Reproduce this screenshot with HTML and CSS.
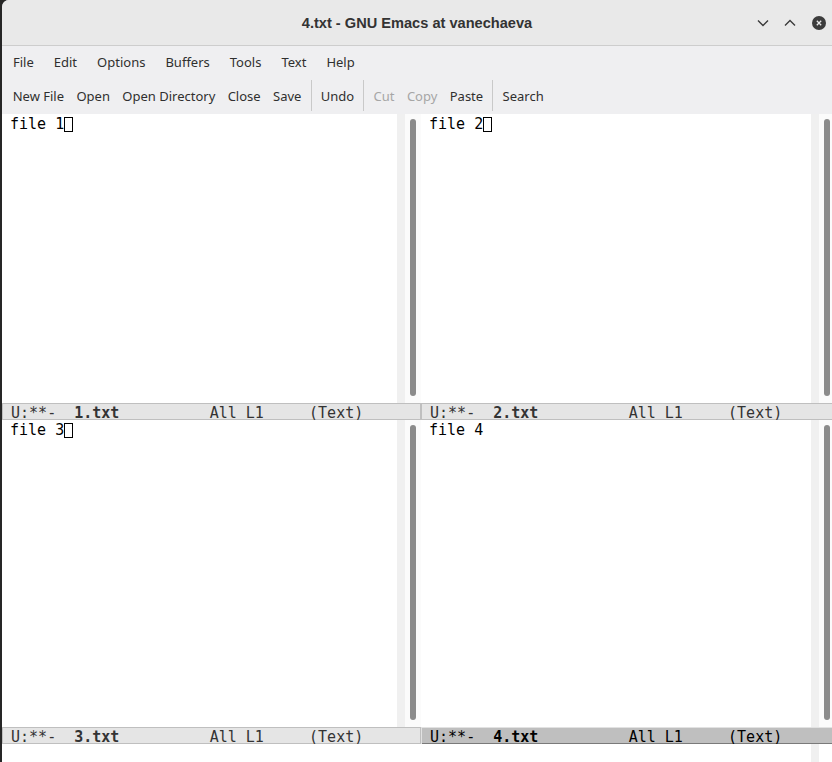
FILE: index.html
```html
<!DOCTYPE html>
<html>
<head>
<meta charset="utf-8">
<link rel="stylesheet" href="styles.css">
</head>
<body>
<div class="app">
  <header class="titlebar">
    <div class="title">4.txt - GNU Emacs at vanechaeva</div>
    <div class="wm">
      <span class="wm-btn"><svg width="12" height="8" viewBox="0 0 12 8"><polyline points="1,1.5 6,6.5 11,1.5" fill="none" stroke="#3a3a3a" stroke-width="1.4"/></svg></span>
      <span class="wm-btn"><svg width="12" height="8" viewBox="0 0 12 8"><polyline points="1,6.5 6,1.5 11,6.5" fill="none" stroke="#3a3a3a" stroke-width="1.4"/></svg></span>
      <span class="wm-btn close"><svg width="14" height="14" viewBox="0 0 14 14"><circle cx="7" cy="7" r="7" fill="#3c3c3c"/><path d="M4.8 4.8 L9.2 9.2 M9.2 4.8 L4.8 9.2" stroke="#e9e9e9" stroke-width="1.3"/></svg></span>
    </div>
  </header>
  <nav class="menubar">
    <span class="menu-item">File</span>
    <span class="menu-item">Edit</span>
    <span class="menu-item">Options</span>
    <span class="menu-item">Buffers</span>
    <span class="menu-item">Tools</span>
    <span class="menu-item">Text</span>
    <span class="menu-item">Help</span>
  </nav>
  <div class="toolbar">
    <span class="tool">New File</span>
    <span class="tool">Open</span>
    <span class="tool">Open Directory</span>
    <span class="tool">Close</span>
    <span class="tool">Save</span>
    <span class="sep"></span>
    <span class="tool">Undo</span>
    <span class="sep"></span>
    <span class="tool disabled">Cut</span>
    <span class="tool disabled">Copy</span>
    <span class="tool">Paste</span>
    <span class="sep"></span>
    <span class="tool">Search</span>
  </div>
  <main class="frame">
    <section class="window">
      <div class="body">
        <div class="fringe-l"></div>
        <div class="text">file 1<span class="cursor"></span></div>
        <div class="fringe-r"></div>
        <div class="scrollbar"><div class="thumb"></div></div>
      </div>
      <div class="modeline"> U:**-  <b>1.txt</b>          All L1     (Text)</div>
    </section>
    <section class="window">
      <div class="body">
        <div class="fringe-l"></div>
        <div class="text">file 2<span class="cursor"></span></div>
        <div class="fringe-r"></div>
        <div class="scrollbar"><div class="thumb"></div></div>
      </div>
      <div class="modeline"> U:**-  <b>2.txt</b>          All L1     (Text)</div>
    </section>
    <section class="window">
      <div class="body">
        <div class="fringe-l"></div>
        <div class="text">file 3<span class="cursor"></span></div>
        <div class="fringe-r"></div>
        <div class="scrollbar"><div class="thumb"></div></div>
      </div>
      <div class="modeline"> U:**-  <b>3.txt</b>          All L1     (Text)</div>
    </section>
    <section class="window">
      <div class="body">
        <div class="fringe-l"></div>
        <div class="text">file 4</div>
        <div class="fringe-r"></div>
        <div class="scrollbar"><div class="thumb"></div></div>
      </div>
      <div class="modeline active"> U:**-  <b>4.txt</b>          All L1     (Text)</div>
    </section>
  </main>
  <div class="echo">
    <div class="echo-fl"></div>
    <div class="echo-text"></div>
    <div class="echo-fr"></div>
    <div class="echo-rest"></div>
  </div>
</div>
</body>
</html>
```

FILE: styles.css
```css
html, body {
  margin: 0;
  padding: 0;
}
body {
  background: #262626;
  width: 832px;
  height: 762px;
  overflow: hidden;
}
.app {
  margin-left: 2px;
  width: 830px;
  height: 762px;
  overflow: hidden;
  background: #efeff1;
  border-top-left-radius: 7px;
  display: flex;
  flex-direction: column;
}
.titlebar {
  height: 45px;
  flex: 0 0 45px;
  border-bottom: 1px solid #cdcdcd;
  background: #e9e9e9;
  display: grid;
  grid-template-columns: 1fr auto 1fr;
  align-items: center;
}
.title {
  grid-column: 2;
  font: bold 14.6px "Liberation Sans", Arial, sans-serif;
  color: #333333;
  margin-top: 1px;
}
.wm {
  grid-column: 3;
  justify-self: end;
  display: flex;
  align-items: center;
  gap: 1px;
}
.wm-btn {
  width: 26px;
  height: 26px;
  display: flex;
  align-items: center;
  justify-content: center;
}
.wm-btn.close {
  margin-left: 2px;
}
.menubar {
  height: 33px;
  flex: 0 0 33px;
  box-sizing: border-box;
  padding: 7px 0 0 1px;
  display: flex;
  font: 13px/18px "Noto Sans", sans-serif;
  color: #2f2f2f;
}
.menu-item {
  padding: 0 10px;
}
.toolbar {
  height: 35px;
  flex: 0 0 35px;
  box-sizing: border-box;
  padding-left: 4.5px;
  display: flex;
  align-items: stretch;
  font: 13px/18px "Noto Sans", sans-serif;
  color: #2f2f2f;
}
.tool {
  padding: 8px 6.2px 0;
}
.tool.disabled {
  color: #a6a6a6;
}
.sep {
  width: 1px;
  background: #c9c9c9;
  margin: 1px 3px 3px;
}
.frame {
  flex: 0 0 630px;
  display: grid;
  grid-template-columns: 419px 414px;
  grid-template-rows: 306px 324px;
}
.window {
  display: grid;
  grid-template-rows: 1fr 17px;
  background: #ffffff;
  min-width: 0;
}
.body {
  display: grid;
  grid-template-columns: 8px 1fr 8px 16px;
  min-height: 0;
}
.fringe-l {
  background: #ffffff;
}
.fringe-r {
  background: #f0f0f0;
}
.text {
  font: 15px/17px "DejaVu Sans Mono", monospace;
  color: #000000;
  white-space: pre;
  overflow: hidden;
  padding-top: 2px;
}
.cursor {
  display: inline-block;
  width: 9px;
  height: 15px;
  box-sizing: border-box;
  border: 1px solid #000000;
  vertical-align: -3px;
}
.scrollbar {
  background: #fbfbfb;
  padding: 5px 5px 7px 5px;
  display: flex;
}
.thumb {
  flex: 0 0 6px;
  background: #8b8b8b;
  border-radius: 3px;
}
.modeline {
  font: 15px/17px "DejaVu Sans Mono", monospace;
  white-space: pre;
  overflow: hidden;
  box-sizing: border-box;
  padding-top: 1.5px;
  background: #e5e5e5;
  color: #333333;
  box-shadow: inset 0 0 0 1px #bfbfbf;
}
.modeline b {
  font-weight: bold;
}
.modeline.active {
  background: #bfbfbf;
  color: #000000;
  box-shadow: inset 1px 1px 0 #e2e2e2, inset -1px -1px 0 #7a7a7a;
}
.echo {
  flex: 0 0 18px;
  display: grid;
  grid-template-columns: 8px 801px 8px 1fr;
  background: #ffffff;
}
.echo-fr {
  background: #f0f0f0;
}
```
